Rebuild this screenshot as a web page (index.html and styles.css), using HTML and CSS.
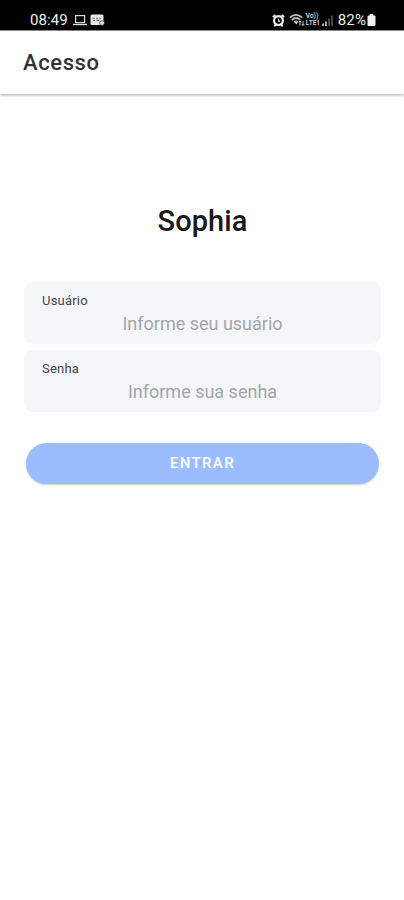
FILE: index.html
```html
<!DOCTYPE html>
<html lang="pt-BR">
<head>
    <meta charset="UTF-8">
    <title>Acesso</title>
    <meta name="viewport" content="width=device-width, initial-scale=1.0"/>
    <link rel="stylesheet" href="styles.css">
</head>
<body>
    <div class="status-bar">
        <div class="status-left">
            <span class="clock">08:49</span>
            <svg class="laptop" width="14" height="12" viewBox="0 0 14 12">
                <rect x="2.6" y="1.6" width="9" height="7" fill="none" stroke="#ddd" stroke-width="1.2"/>
                <path d="M0 10.5h14" stroke="#ddd" stroke-width="1.4"/>
            </svg>
            <svg class="card" width="15" height="12" viewBox="0 0 15 12">
                <rect x="0.5" y="0.5" width="13" height="10.5" rx="1.5" fill="#e8e8e8"/>
                <path d="M2.5 4.2h2.4M6 4.2h2M9.2 4.2h2M3 6.4h2M6.5 6.4h3" stroke="#666" stroke-width="1.1"/>
                <circle cx="12" cy="9" r="2.4" fill="#ddd" stroke="#333" stroke-width="0.7"/>
            </svg>
        </div>
        <div class="status-right">
            <svg class="alarm" width="13" height="13" viewBox="0 0 13 13">
                <path d="M0.8 3L3.4 0.9M12.2 3L9.6 0.9M2.3 12.3l1.6-1.8M10.7 12.3L9.1 10.5" stroke="#eee" stroke-width="1.9"/>
                <circle cx="6.5" cy="6.6" r="4.4" fill="none" stroke="#f5f5f5" stroke-width="2.2"/>
                <path d="M6.5 4.5v2.6h1.7" fill="none" stroke="#eee" stroke-width="1.1"/>
            </svg>
            <svg class="wifi" width="16" height="12" viewBox="0 0 16 12">
                <path d="M0.7 3.7Q7 -1.8 13.3 3.7M2.8 5.8Q7 2.2 11.2 5.8" fill="none" stroke="#bbb" stroke-width="1.7"/>
                <path d="M4.5 7.5Q7 5.4 9.3 7.5L7.5 10.5z" fill="#bbb"/>
                <path d="M11 11.5V7M14 7V11.5M9.8 8.4L11 7l1.2 1.4M12.8 10.1L14 11.5l1.2-1.4" fill="none" stroke="#ccc"/>
            </svg>
            <span class="volte"><span>Vo))</span><span>LTE1</span></span>
            <svg class="signal" width="11" height="11" viewBox="0 0 11 11">
                <path d="M0 11V8.5h2V11zM3 11V6.5h2V11z" fill="#aaa"/>
                <path d="M6 11V3.5h2V11zM9 11V0.5h2V11z" fill="#444"/>
            </svg>
            <span class="percent">82%</span>
            <svg class="battery" width="9" height="12" viewBox="0 0 9 12">
                <path d="M2.7 0h3.6v1.4h1.2q1 0 1 1V11q0 1-1 1h-6q-1 0-1-1V2.4q0-1 1-1h1.2z" fill="#f0f0f0"/>
            </svg>
        </div>
    </div>

    <header class="toolbar">
        <h1>Acesso</h1>
    </header>

    <main class="content">
        <h2>Sophia</h2>
        <form>
            <div class="field">
                <label for="usuario">Usuário</label>
                <input type="text" id="usuario" placeholder="Informe seu usuário">
            </div>
            <div class="field">
                <label for="senha">Senha</label>
                <input type="password" id="senha" placeholder="Informe sua senha">
            </div>
            <button type="button" class="btn" disabled>ENTRAR</button>
        </form>
    </main>
</body>
</html>
```
FILE: styles.css
```css
* {
    box-sizing: border-box;
}
body {
    margin: 0;
    min-height: 900px;
    background: #fefefe;
    font-family: Roboto, sans-serif;
}
.status-bar {
    display: flex;
    justify-content: space-between;
    height: 30px;
    padding: 10px 28px 0 30px;
    background: #000;
    color: #eee;
}
.status-left, .status-right {
    display: flex;
    align-items: center;
    height: 20px;
}
.clock {
    font-size: 15px;
    letter-spacing: 0.1px;
}
.laptop {
    margin-left: 5px;
}
.card {
    margin-left: 3px;
}
.wifi {
    margin-left: 4px;
}
.volte {
    display: flex;
    flex-direction: column;
    width: 15px;
    margin-left: 1px;
    font-size: 6.5px;
    font-weight: bold;
    line-height: 7px;
    color: #ccc;
}
.signal {
    margin-left: 1px;
}
.percent {
    margin-left: 5px;
    font-size: 15px;
    letter-spacing: 0.1px;
}
.battery {
    margin-left: 1px;
}
.toolbar {
    display: flex;
    align-items: center;
    height: 64px;
    padding: 0 23px;
    border-top: 1px solid #888;
    background: #fff;
    box-shadow: 0 1px 3px rgba(0,0,0,0.35);
}
.toolbar h1 {
    margin: 0;
    font-size: 22px;
    font-weight: 500;
    letter-spacing: 0.6px;
    color: #333;
}
.content {
    padding: 110px 23px 0 24px;
}
.content h2 {
    margin: 0 0 43px;
    font-size: 29px;
    font-weight: 500;
    line-height: 35px;
    text-align: center;
    letter-spacing: 0.1px;
    color: #1a1a1a;
}
.field {
    height: 62px;
    margin-bottom: 6px;
    padding: 11px 18px 0;
    border-radius: 9px;
    background: #f4f6fa;
}
.field label {
    display: block;
    font-size: 13px;
    line-height: 16px;
    letter-spacing: 0.2px;
    color: #424346;
}
.field input {
    display: block;
    width: 100%;
    height: 24px;
    margin-top: 2px;
    padding: 0;
    border: none;
    outline: none;
    background: none;
    font-family: inherit;
    font-size: 18px;
    text-align: center;
}
.field input::placeholder {
    color: #a3a5a9;
}
.btn {
    display: block;
    width: 353px;
    height: 41px;
    margin: 31px 0 0 2px;
    padding: 0 0 2px;
    border: none;
    border-radius: 21px;
    background: #9bbdff;
    box-shadow: 0 1px 2px rgba(0,0,0,0.2);
    color: #f7faff;
    font-family: inherit;
    font-size: 15px;
    font-weight: 600;
    letter-spacing: 1.3px;
}
```
